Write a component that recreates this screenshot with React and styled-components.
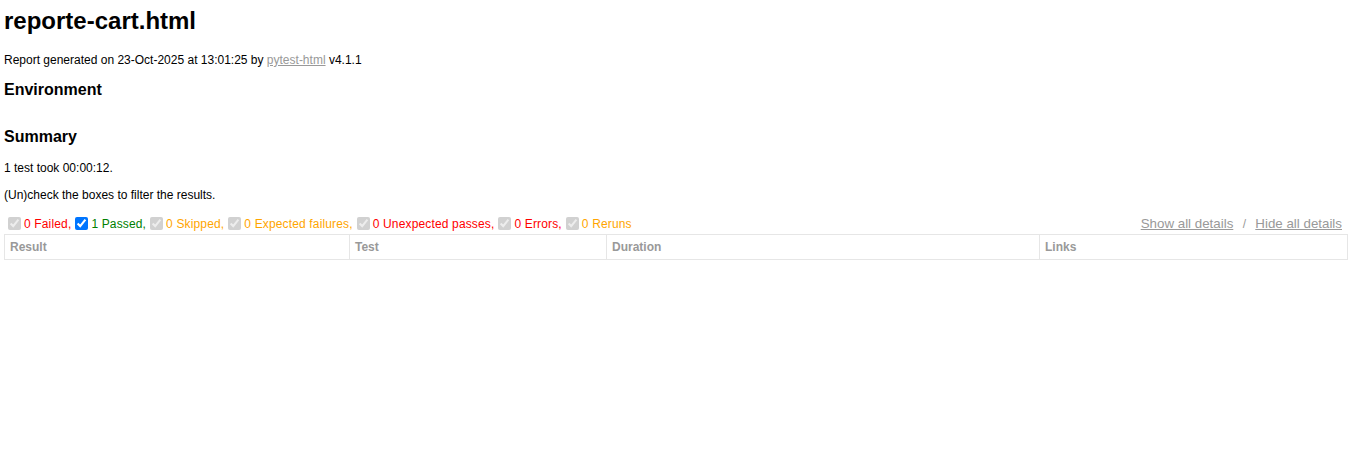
import React from 'react';
import styled, { createGlobalStyle } from 'styled-components';

const GlobalStyle = createGlobalStyle`
  body {
    margin: 0;
    padding: 0 7px 0 4px;
    font-family: "Liberation Sans", Helvetica, Arial, sans-serif;
    font-size: 12px;
    color: #999;
    background: #fff;
  }
`;

const Title = styled.h1`
  font-size: 24px;
  color: black;
  margin: 7px 0 18px;
`;

const Text = styled.p`
  color: black;
  margin: 13px 0 12px;
`;

const Link = styled.a`
  color: #999;
`;

const Heading = styled.h2`
  font-size: 16px;
  color: black;
  margin: 14px 0 ${p => p.$after || '14px'};
`;

const Environment = styled.div`
  padding-bottom: 1px;
`;

const Summary = styled.div`
  display: block;
`;

const Controls = styled.div`
  display: flex;
  justify-content: space-between;
  margin-bottom: 1px;
`;

const Filters = styled.div`
  display: flex;
  align-items: center;
`;

const Check = styled.input`
  width: 13px;
  height: 13px;
  margin: 3px 3px 3px 4px;
`;

const Count = styled.span`
  color: ${p => p.color};
  letter-spacing: 0.15px;
`;

const Collapse = styled.div`
  display: flex;
  align-items: center;
  white-space: pre;
`;

const LinkButton = styled.button`
  color: #999;
  border: none;
  background: none;
  font-family: inherit;
  font-size: 13.333px;
  padding: 1px 6px;
  text-decoration: underline;
  cursor: pointer;
`;

const Results = styled.table`
  border-collapse: collapse;
  table-layout: fixed;
  border: 1px solid #e6e6e6;
  color: #999;
  font-size: 12px;
  width: 100%;
`;

const HeadCell = styled.th`
  padding: 5px;
  border: 1px solid #e6e6e6;
  text-align: left;
  font-weight: bold;
  width: ${p => p.w};
`;

const filters = [
  { label: '0 Failed,', color: 'red' },
  { label: '1 Passed,', color: 'green', active: true },
  { label: '0 Skipped,', color: 'orange' },
  { label: '0 Expected failures,', color: 'orange' },
  { label: '0 Unexpected passes,', color: 'red' },
  { label: '0 Errors,', color: 'red' },
  { label: '0 Reruns', color: 'orange' },
];

const columns = [
  { name: 'Result', w: '334px' },
  { name: 'Test', w: '246px' },
  { name: 'Duration', w: '422px' },
  { name: 'Links', w: 'auto' },
];

export default function App() {
  return (
    <>
      <GlobalStyle />
      <Title>reporte-cart.html</Title>
      <Text>
        Report generated on 23-Oct-2025 at 13:01:25 by{' '}
        <Link href="#">pytest-html</Link> v4.1.1
      </Text>
      <Environment>
        <Heading>Environment</Heading>
      </Environment>
      <Summary>
        <Heading $after="15px">Summary</Heading>
        <Text>1 test took 00:00:12.</Text>
        <Text>(Un)check the boxes to filter the results.</Text>
        <Controls>
          <Filters>
            {filters.map(f => (
              <React.Fragment key={f.label}>
                <Check type="checkbox" defaultChecked disabled={!f.active} />
                <Count color={f.color}>{f.label}</Count>
              </React.Fragment>
            ))}
          </Filters>
          <Collapse>
            <LinkButton>Show all details</LinkButton>
            {'\u00a0/\u00a0'}
            <LinkButton>Hide all details</LinkButton>
          </Collapse>
        </Controls>
      </Summary>
      <Results>
        <thead>
          <tr>
            {columns.map(c => (
              <HeadCell key={c.name} w={c.w}>{c.name}</HeadCell>
            ))}
          </tr>
        </thead>
      </Results>
    </>
  );
}
